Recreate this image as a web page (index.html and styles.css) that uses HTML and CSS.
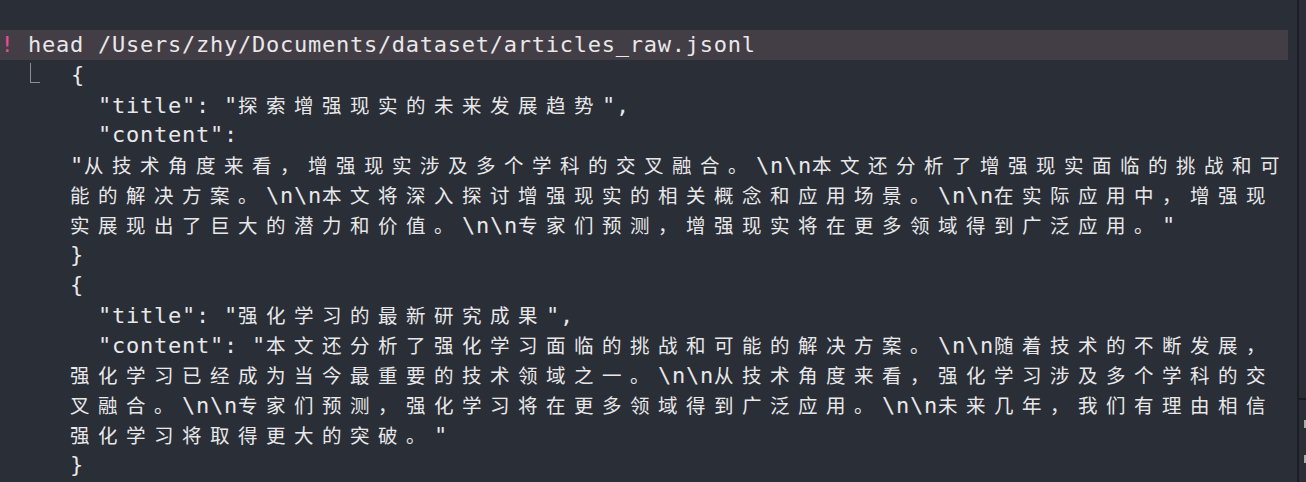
FILE: index.html
```html
<!DOCTYPE html>
<html lang="zh">
<head>
<meta charset="utf-8">
<title>Terminal</title>
<link rel="stylesheet" href="styles.css">
</head>
<body>
<div class="screen">
  <div class="pane">
    <div class="ln cmd"><span class="bang">!</span><span class="gap"></span>head /Users/zhy/Documents/dataset/articles_raw.jsonl</div>
    <div class="ln i2"><span class="elbow"></span><span class="gap1"></span>{</div>
    <div class="ln i7">"title": "<span class="c">探索增强现实的未来发展趋势</span>",</div>
    <div class="ln i7">"content":</div>
    <div class="ln i5">"<span class="c">从技术角度来看，增强现实涉及多个学科的交叉融合。</span>\n\n<span class="c">本文还分析了增强现实面临的挑战和可</span></div>
    <div class="ln i5"><span class="c">能的解决方案。</span>\n\n<span class="c">本文将深入探讨增强现实的相关概念和应用场景。</span>\n\n<span class="c">在实际应用中，增强现</span></div>
    <div class="ln i5"><span class="c">实展现出了巨大的潜力和价值。</span>\n\n<span class="c">专家们预测，增强现实将在更多领域得到广泛应用。</span>"</div>
    <div class="ln i5">}</div>
    <div class="ln i5">{</div>
    <div class="ln i7">"title": "<span class="c">强化学习的最新研究成果</span>",</div>
    <div class="ln i7">"content": "<span class="c">本文还分析了强化学习面临的挑战和可能的解决方案。</span>\n\n<span class="c">随着技术的不断发展，</span></div>
    <div class="ln i5"><span class="c">强化学习已经成为当今最重要的技术领域之一。</span>\n\n<span class="c">从技术角度来看，强化学习涉及多个学科的交</span></div>
    <div class="ln i5"><span class="c">叉融合。</span>\n\n<span class="c">专家们预测，强化学习将在更多领域得到广泛应用。</span>\n\n<span class="c">未来几年，我们有理由相信</span></div>
    <div class="ln i5"><span class="c">强化学习将取得更大的突破。</span>"</div>
    <div class="ln i5">}</div>
  </div>
  <div class="divider"></div>
  <div class="side">
    <div class="side-top"></div>
    <div class="side-rule"></div>
    <div class="side-marks">
      <span class="mark"></span>
      <span class="mark"></span>
    </div>
  </div>
</div>
</body>
</html>
```

FILE: styles.css
```css
html, body {
  margin: 0;
  padding: 0;
  background: #2a2e36;
  overflow: hidden;
}

.screen {
  display: flex;
  width: 1306px;
  height: 482px;
  background: #2a2e36;
}

.pane {
  width: 1297px;
  padding-top: 30px;
  box-sizing: border-box;
  font-family: "DejaVu Sans Mono", "Noto Sans CJK SC", monospace;
  font-size: 22px;
  letter-spacing: 0.75px;
  color: #e8e8ea;
}

.ln {
  height: 30px;
  line-height: 30px;
  white-space: pre;
  overflow: hidden;
}

.cmd {
  width: 1288px;
  background: #433d45;
}

.i2 { padding-left: 28px; }
.i5 { padding-left: 70px; }
.i7 { padding-left: 98px; }

.bang {
  display: inline-block;
  width: 14px;
  color: #ec4c98;
  text-align: center;
  letter-spacing: 0;
}

.gap { display: inline-block; width: 14px; }
.gap1 { display: inline-block; width: 31px; }

.elbow {
  display: inline-block;
  width: 10px;
  height: 20px;
  margin-left: 2px;
  border-left: 1.5px solid #8e8e90;
  border-bottom: 1.5px solid #8e8e90;
  box-sizing: border-box;
  vertical-align: -1px;
}

.c {
  font-family: "Noto Sans CJK SC", sans-serif;
  font-size: 19.5px;
  letter-spacing: 8.5px;
  line-height: 30px;
}

.divider {
  width: 2px;
  background: #1b1d22;
}

.side {
  flex: 1;
  display: flex;
  flex-direction: column;
}

.side-top { height: 398px; }

.side-rule {
  height: 2px;
  background: #1b1d22;
}

.side-marks {
  display: flex;
  flex-direction: column;
  align-items: flex-end;
  gap: 27px;
  padding-top: 20px;
}

.mark {
  width: 2px;
  height: 8px;
  background: #a9abb0;
}
```
